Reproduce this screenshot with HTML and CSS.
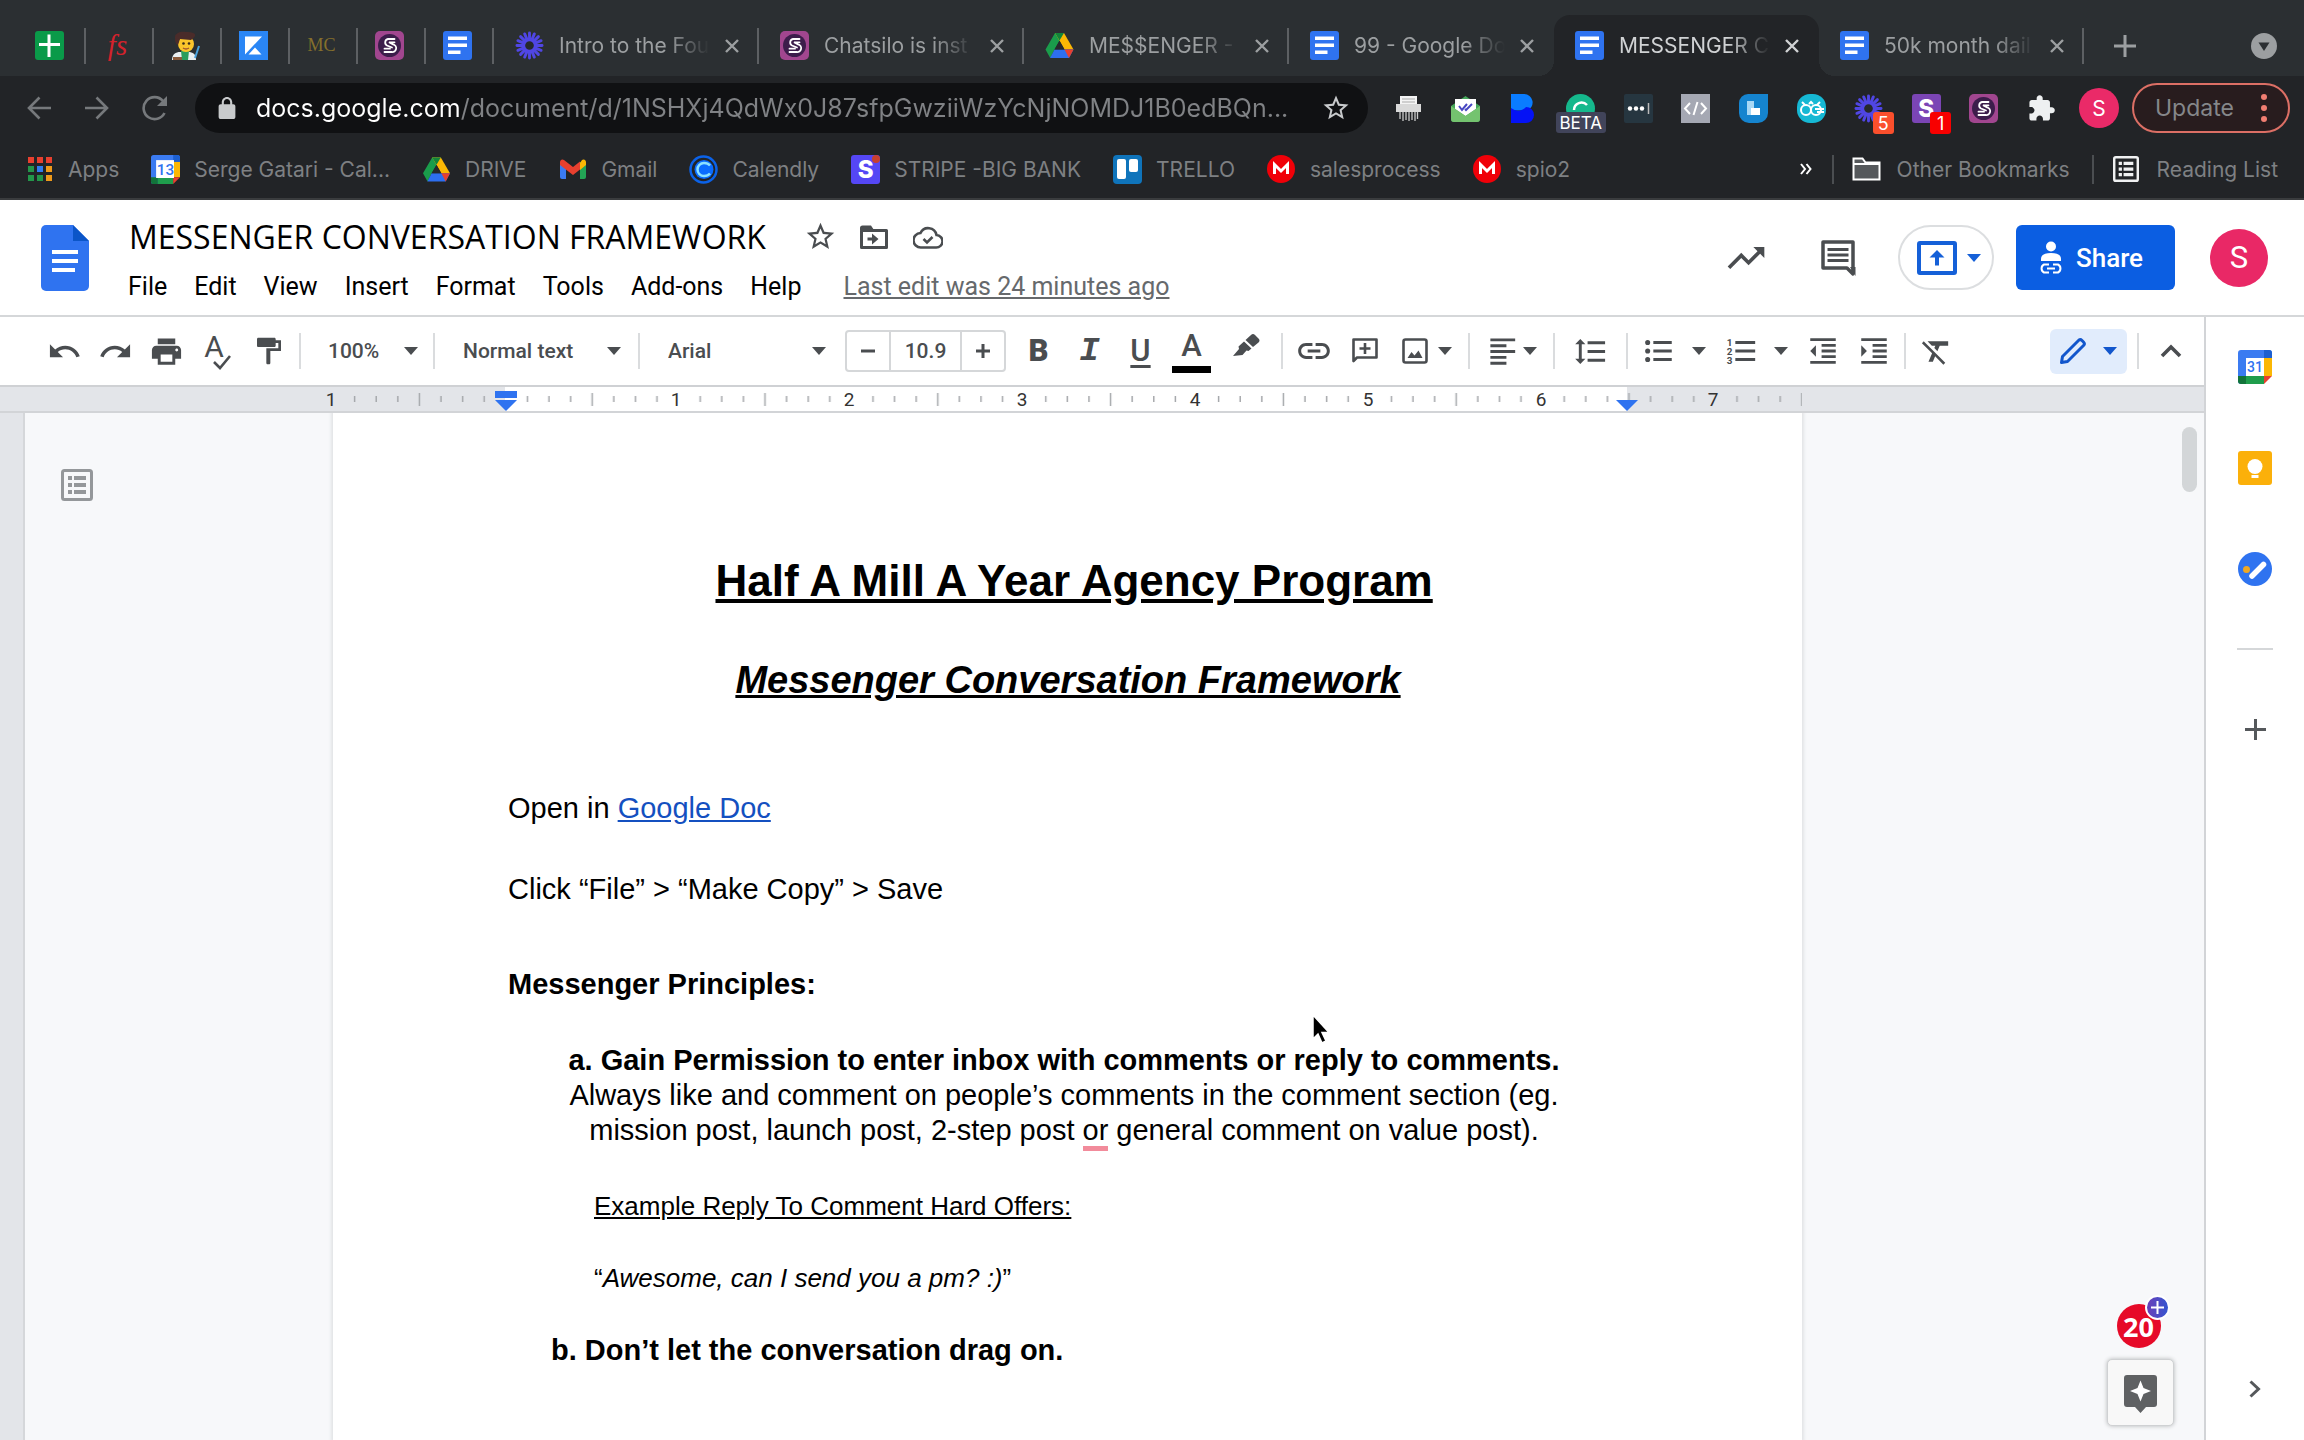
FILE: index.html
```
<!DOCTYPE html>
<html lang="en">
<head>
    <meta charset="UTF-8">
    <meta name="viewport" content="width=device-width, initial-scale=1.0">
    <title>MESSENGER CONVERSATION FRAMEWORK - Google Docs</title>
    <link rel="stylesheet" href="styles.css">
</head>
<body>
    <!-- Shared icons -->
    <svg class="sprite" aria-hidden="true">
        <symbol id="i-caret" viewBox="0 0 14 8"><path d="M0 0h14L7 8z"/></symbol>
        <symbol id="i-close" viewBox="0 0 14 14"><path d="M1 1l12 12M13 1L1 13" fill="none" stroke="currentColor" stroke-width="2.4"/></symbol>
        <symbol id="i-doc" viewBox="0 0 29 29">
            <rect width="29" height="29" rx="3" fill="#2f73f0"/>
            <path d="M5 5.500h19v3.500H5zM5 12.500h19V16H5zM5 19.500h12.500V23H5z" fill="#fff"/>
        </symbol>
        <symbol id="i-silo" viewBox="0 0 29 29">
            <rect width="29" height="29" rx="5" fill="#a1468f"/>
            <circle cx="14.500" cy="14.500" r="11.500" fill="#3c1d4b"/>
            <path d="M19.500 8h-6.500a3.500 3.500 0 0 0-1 6.500l5 2M19.500 11.300h-5.500l4 2a3.800 3.800 0 0 1-1.500 7.700H9.500M15 17.700H9.500" fill="none" stroke="#fff" stroke-width="1.800" stroke-linecap="round"/>
        </symbol>
        <symbol id="i-loom" viewBox="0 0 30 30">
            <g stroke="#5046e4" stroke-width="3" stroke-linecap="round">
                <path d="M15 2v26M2 15h26M5.800 5.800l18.400 18.400M24.200 5.800L5.800 24.200M10 3l10 24M20 3L10 27M3 10l24 10M27 10L3 20"/>
            </g>
            <circle cx="15" cy="15" r="5" fill="#26292c"/>
            <circle cx="15" cy="15" r="5.500" fill="none" stroke="#5046e4" stroke-width="2"/>
        </symbol>
        <symbol id="i-drive" viewBox="0 0 28 25">
            <path d="M9.500 0h9L9 16.500 4.700 25 0 16.500z" fill="#1a9c4b"/>
            <path d="M9.500 0h9L28 16.500h-9z" fill="#fbb704"/>
            <path d="M9 16.500h19L23.500 25h-19z" fill="#2d6ff0"/>
            <path d="M19 16.500h9L23.500 25z" fill="#e8402f"/>
            <path d="M14 7.500l5 9H9z" fill="#26292c"/>
            <path d="M9.500 0h9L14 7.500z" fill="#12843a"/>
        </symbol>
        <symbol id="i-mind" viewBox="0 0 28 28">
            <circle cx="14" cy="14" r="14" fill="#f00008"/>
            <path d="M7.500 19V9.500L14 16l6.500-6.500V19" fill="none" stroke="#fff" stroke-width="3"/>
        </symbol>
        <symbol id="i-star" viewBox="0 0 24 24"><path d="M22 9.240l-7.190-.62L12 2 9.190 8.630 2 9.240l5.460 4.730L5.820 21 12 17.270 18.180 21l-1.630-7.030L22 9.240zM12 15.400l-3.760 2.270 1-4.280-3.320-2.880 4.380-.38L12 6.100l1.710 4.040 4.380.38-3.320 2.880 1 4.280L12 15.400z"/></symbol>
        <symbol id="i-list" viewBox="0 0 32 32">
            <rect x="1.500" y="1.500" width="29" height="29" rx="2" fill="none" stroke="currentColor" stroke-width="3"/>
            <path d="M7 7h4v4H7zM13 7h12v4H13zM7 14h4v4H7zM13 14h12v4H13zM7 21h4v4H7zM13 21h12v4H13z"/>
        </symbol>
        <symbol id="i-undo" viewBox="0 0 24 24"><path d="M12.500 8c-2.650 0-5.050.99-6.900 2.600L2 7v9h9l-3.620-3.620c1.390-1.160 3.160-1.880 5.120-1.880 3.540 0 6.550 2.310 7.600 5.500l2.370-.78C21.080 11.030 17.150 8 12.500 8z"/></symbol>
        <symbol id="i-cal" viewBox="0 0 34 34">
            <path d="M3 0h28a3 3 0 0 1 3 3v5H8v26H3a3 3 0 0 1-3-3V3a3 3 0 0 1 3-3z" fill="#3b7bf1"/>
            <path d="M26 8h8v18h-8z" fill="#fbb704"/>
            <path d="M26 0h5a3 3 0 0 1 3 3v5h-8z" fill="#1c5fd0"/>
            <path d="M8 26h18v8H8z" fill="#1f9d4c"/>
            <path d="M0 26h8v8H3a3 3 0 0 1-3-3z" fill="#12743a"/>
            <path d="M26 26h8l-8 8z" fill="#e8402f"/>
            <path d="M8 8h18v18H8z" fill="#fff"/>
        </symbol>
    </svg>

    <header class="browser">
        <div class="tabstrip">
            <div class="tab pinned">
                <svg width="29" height="29" viewBox="0 0 29 29"><rect width="29" height="29" rx="3" fill="#0a9a49"/><path d="M12.500 3.500h3v8.500h9.500v3h-9.500v11h-3V15H4v-3h8.500z" fill="#fff"/></svg>
            </div>
            <div class="tab pinned"><span class="mark fs">fs</span></div>
            <div class="tab pinned">
                <svg width="29" height="29" viewBox="0 0 29 29">
                    <path d="M1 29c0-6 4-8 8-8h8c5 0 8 2 8 8z" fill="#e9eef0"/>
                    <path d="M10 20h8l-1 9h-6z" fill="#2a9d5c"/>
                    <path d="M2 26h9v3H2z" fill="#8a5a3a"/>
                    <circle cx="15" cy="13" r="8" fill="#fcc52b"/>
                    <path d="M4 6c0-4 6-6 11-5 6 0 10 1 9 4-1 2-3 3-4 4l-11-1-2 6c-3-1-3-5-3-8z" fill="#4a2c2a"/>
                    <circle cx="12.500" cy="12.500" r="1.300" fill="#3a2a1a"/><circle cx="18" cy="12.500" r="1.300" fill="#3a2a1a"/>
                    <path d="M12 17q3 2 6 0" fill="none" stroke="#a0522d" stroke-width="1.300"/>
                    <path d="M24 27l4-12" stroke="#4aa3df" stroke-width="2"/>
                </svg>
            </div>
            <div class="tab pinned">
                <svg width="29" height="29" viewBox="0 0 29 29"><path d="M0 0h29v29H0z" fill="#2a86f5"/><path d="M6 5.500h17L6 23.500zM9.500 23.500l6.500-7 6.500 7z" fill="#fff"/></svg>
            </div>
            <div class="tab pinned"><span class="mark mc">MC</span></div>
            <div class="tab pinned"><svg width="29" height="29"><use href="#i-silo"/></svg></div>
            <div class="tab pinned"><svg width="29" height="29"><use href="#i-doc"/></svg></div>

            <div class="tab">
                <svg width="29" height="29"><use href="#i-loom"/></svg>
                <span class="tab-title">Intro to the Fou</span>
                <button class="close" aria-label="Close tab"><svg width="14" height="14"><use href="#i-close"/></svg></button>
            </div>
            <div class="tab">
                <svg width="29" height="29"><use href="#i-silo"/></svg>
                <span class="tab-title">Chatsilo is inst</span>
                <button class="close" aria-label="Close tab"><svg width="14" height="14"><use href="#i-close"/></svg></button>
            </div>
            <div class="tab">
                <svg width="29" height="25"><use href="#i-drive"/></svg>
                <span class="tab-title">ME$$ENGER -</span>
                <button class="close" aria-label="Close tab"><svg width="14" height="14"><use href="#i-close"/></svg></button>
            </div>
            <div class="tab before-active">
                <svg width="29" height="29"><use href="#i-doc"/></svg>
                <span class="tab-title">99 - Google Do</span>
                <button class="close" aria-label="Close tab"><svg width="14" height="14"><use href="#i-close"/></svg></button>
            </div>
            <div class="tab active">
                <svg width="29" height="29"><use href="#i-doc"/></svg>
                <span class="tab-title">MESSENGER C</span>
                <button class="close" aria-label="Close tab"><svg width="14" height="14"><use href="#i-close"/></svg></button>
            </div>
            <div class="tab">
                <svg width="29" height="29"><use href="#i-doc"/></svg>
                <span class="tab-title">50k month dail</span>
                <button class="close" aria-label="Close tab"><svg width="14" height="14"><use href="#i-close"/></svg></button>
            </div>
            <button class="new-tab" aria-label="New tab"><svg width="22" height="22" viewBox="0 0 22 22"><path d="M9.500 0h3v9.500H22v3h-9.500V22h-3v-9.500H0v-3h9.500z"/></svg></button>
            <button class="tab-search" aria-label="Search tabs"><svg width="26" height="26" viewBox="0 0 26 26"><circle cx="13" cy="13" r="13"/><path d="M7.500 9.500h11L13 18z" fill="#2b2f32"/></svg></button>
        </div>

        <div class="navbar">
            <button class="nav" aria-label="Back"><svg width="24" height="24" viewBox="0 0 24 24"><path d="M24 12H2M12.500 1.500L2 12l10.500 10.500" fill="none" stroke="currentColor" stroke-width="2.600"/></svg></button>
            <button class="nav" aria-label="Forward"><svg width="24" height="24" viewBox="0 0 24 24"><path d="M0 12h22M11.500 1.500L22 12 11.500 22.500" fill="none" stroke="currentColor" stroke-width="2.600"/></svg></button>
            <button class="nav" aria-label="Reload"><svg width="26" height="26" viewBox="0 0 26 26"><path d="M22.500 18A11 11 0 1 1 21 6l3 3.500" fill="none" stroke="currentColor" stroke-width="2.600"/><path d="M25 1v10H15z"/></svg></button>

            <div class="omnibox">
                <svg width="22" height="22" viewBox="3 1 18 21"><path d="M18 8h-1V6c0-2.760-2.240-5-5-5S7 3.240 7 6v2H6c-1.100 0-2 .9-2 2v10c0 1.100.9 2 2 2h12c1.100 0 2-.9 2-2V10c0-1.100-.9-2-2-2zM9 6c0-1.660 1.340-3 3-3s3 1.340 3 3v2H9V6z"/></svg>
                <input type="text" aria-label="Address" value="docs.google.com/document/d/1NSHXj4QdWx0J87sfpGwziiWzYcNjNOMDJ1B0edBQn...">
                <button aria-label="Bookmark this tab"><svg width="30" height="30"><use href="#i-star"/></svg></button>
            </div>

            <div class="extensions">
                <button class="ext" aria-label="Print"><svg width="25" height="25" viewBox="0 0 25 25"><path d="M4 0h17v9H4z" fill="#f4f4f4"/><path d="M0 8h25v8H0z" fill="#d9d9d9"/><path d="M6 3h13M6 6h13" stroke="#aaa"/><path d="M4 16v7M7 16v9M10 16v8M13 16v9M16 16v8M19 16v9M21.500 16v7" stroke="#c9c9c9" stroke-width="1.300"/></svg></button>
                <button class="ext" aria-label="Mail tracker"><svg width="29" height="29" viewBox="0 0 29 29"><path d="M0 12L14.500 2 29 12v13a3 3 0 0 1-3 3H3a3 3 0 0 1-3-3z" fill="#45a65a"/><path d="M4 5h21v10l-10.500 7L4 15z" fill="#fff"/><path d="M0 12l14.500 10L29 12v13a3 3 0 0 1-3 3H3a3 3 0 0 1-3-3z" fill="#74c36f"/><path d="M8 12l3 4 5-6M14 15l1 1 6-6" fill="none" stroke="#4747c2" stroke-width="2"/></svg></button>
                <button class="ext" aria-label="Extension"><svg width="24" height="29" viewBox="0 0 24 29"><path d="M0 0h13a8.500 8.500 0 0 1 3 16.500H0z" fill="#0a7cff"/><path d="M0 14q8 6 15-1a8 8 0 1 1 0 16H0z" fill="#0412f5"/></svg></button>
                <button class="ext grammar" aria-label="Grammar, beta"><svg width="29" height="29" viewBox="0 0 29 29"><circle cx="14.500" cy="14.500" r="14.500" fill="#15b88c"/><path d="M8 16a7.500 7.500 0 0 1 13-5" fill="none" stroke="#fff" stroke-width="2.500"/></svg><span class="beta">BETA</span></button>
                <button class="ext" aria-label="Passwords"><svg width="29" height="29" viewBox="0 0 29 29"><rect width="29" height="29" rx="2" fill="#263640"/><g fill="#fff"><circle cx="6" cy="14.500" r="2.200"/><circle cx="12" cy="14.500" r="2.200"/><circle cx="18" cy="14.500" r="2.200"/></g><path d="M24.500 9v11" stroke="#bbb" stroke-width="1.500"/></svg></button>
                <button class="ext" aria-label="Source"><svg width="29" height="29" viewBox="0 0 29 29"><path d="M0 0h29v29H0z" fill="#a5a8b3"/><path d="M9 9l-5 5.500L9 20M20 9l5 5.500-5 5.500M16.500 8l-4 13" fill="none" stroke="#fff" stroke-width="2"/></svg></button>
                <button class="ext" aria-label="Leads"><svg width="29" height="29" viewBox="0 0 29 29"><path d="M9 0h20v19a10 10 0 0 1-10 10h-9A10 10 0 0 1 0 19V9a9 9 0 0 1 9-9z" fill="#1584cf"/><path d="M8 7h7v14H8z" fill="#a9d8f5"/><path d="M12 14h9v7h-9z" fill="#fff"/></svg></button>
                <button class="ext" aria-label="Owl"><svg width="29" height="29" viewBox="0 0 29 29"><rect width="29" height="29" rx="13" fill="#16b8d4"/><g fill="none" stroke="#fff" stroke-width="2"><circle cx="9" cy="16" r="5"/><circle cx="19" cy="16" r="5"/><path d="M5 8l3 3M12 10l2-2 2 2M23 8l-3 3M18 15h9M20 18h7"/></g></svg></button>
                <button class="ext" aria-label="Recorder, 5 new"><svg width="29" height="29"><use href="#i-loom"/></svg><span class="count orange">5</span></button>
                <button class="ext" aria-label="Scraper, 1 new"><span class="letter purple">S</span><span class="count red">1</span></button>
                <button class="ext" aria-label="Chatsilo"><svg width="29" height="29"><use href="#i-silo"/></svg></button>
                <button class="ext puzzle" aria-label="Extensions"><svg width="29" height="29" viewBox="0 0 24 24"><path d="M20.500 11H19V7c0-1.100-.9-2-2-2h-4V3.500C13 2.120 11.880 1 10.500 1S8 2.120 8 3.500V5H4c-1.100 0-1.990.9-1.990 2v3.800H3.500c1.490 0 2.700 1.210 2.700 2.700s-1.210 2.700-2.700 2.700H2V20c0 1.100.9 2 2 2h3.800v-1.500c0-1.490 1.210-2.700 2.700-2.700 1.490 0 2.700 1.210 2.700 2.700V22H17c1.100 0 2-.9 2-2v-4h1.500c1.380 0 2.500-1.120 2.500-2.500S21.880 11 20.500 11z"/></svg></button>
                <button class="profile" aria-label="Profile">S</button>
            </div>
            <button class="update">Update <svg width="6" height="36" viewBox="0 0 6 36"><circle cx="3" cy="7" r="3"/><circle cx="3" cy="18" r="3"/><circle cx="3" cy="29" r="3"/></svg></button>
        </div>

        <nav class="bookmarks">
            <a href="#"><span class="bm-icon"><svg width="24" height="24" viewBox="0 0 24 24"><path d="M0 0h6v6H0zM9 0h6v6H9zM18 0h6v6h-6z" fill="#e8402f"/><path d="M0 9h6v6H0z" fill="#23964a"/><path d="M9 9h6v6H9z" fill="#2f7cf0"/><path d="M18 9h6v6h-6z" fill="#f09a1a"/><path d="M0 18h6v6H0zM9 18h6v6H9z" fill="#23964a"/><path d="M18 18h6v6h-6z" fill="#f09a1a"/></svg></span>Apps</a>
            <a href="#"><span class="bm-icon"><svg width="29" height="29" viewBox="0 0 34 34"><use href="#i-cal" width="34" height="34"/><path d="M6 6h21v21H6z" fill="#fff"/><text x="17" y="23" class="cal-small">13</text></svg></span>Serge Gatari - Cal...</a>
            <a href="#"><span class="bm-icon"><svg width="27" height="25"><use href="#i-drive"/></svg></span>DRIVE</a>
            <a href="#"><span class="bm-icon"><svg width="26" height="20" viewBox="0 0 26 20"><path d="M0 3h6v17H2a2 2 0 0 1-2-2z" fill="#3b7bf1"/><path d="M20 3h6v15a2 2 0 0 1-2 2h-4z" fill="#23a455"/><path d="M20 4l2-3a2.500 2.500 0 0 1 4 2v3l-6 5z" fill="#fbb704"/><path d="M0 3a2.500 2.500 0 0 1 4-2l9 7 7-5.500v8L13 16 0 6z" fill="#e8402f"/></svg></span>Gmail</a>
            <a href="#"><span class="bm-icon"><svg width="29" height="29" viewBox="0 0 29 29"><circle cx="14.500" cy="14.500" r="13" fill="none" stroke="#0b62e8" stroke-width="2.500"/><circle cx="15" cy="14.500" r="9.500" fill="#0a6cff"/><path d="M21 10.500q-2-2.500-6-2.500a6.500 6.500 0 0 0 0 13q4 0 6-2.500" fill="none" stroke="#8be0ff" stroke-width="2.500"/></svg></span>Calendly</a>
            <a href="#"><span class="bm-icon stripe"><span class="letter indigo">S</span></span>STRIPE -BIG BANK</a>
            <a href="#"><span class="bm-icon"><svg width="29" height="29" viewBox="0 0 29 29"><rect width="29" height="29" rx="4" fill="#0f74bb"/><rect x="4" y="4" width="9" height="20" rx="2" fill="#fff"/><rect x="16" y="4" width="9" height="13" rx="2" fill="#fff"/></svg></span>TRELLO</a>
            <a href="#"><span class="bm-icon"><svg width="28" height="28"><use href="#i-mind"/></svg></span>salesprocess</a>
            <a href="#"><span class="bm-icon"><svg width="28" height="28"><use href="#i-mind"/></svg></span>spio2</a>
            <button class="more" aria-label="More bookmarks"><svg width="12" height="12" viewBox="0 0 12 12"><path d="M1 1l4 5-4 5M6.500 1l4 5-4 5" fill="none" stroke="#fff" stroke-width="2"/></svg></button>
            <a href="#" class="split"><span class="bm-icon"><svg width="29" height="24" viewBox="0 0 29 24"><path d="M1.500 1.500h9l3 4h14v17h-26z" fill="#55585b" stroke="#fff" stroke-width="2"/><path d="M2 7h25" stroke="#fff" stroke-width="2"/></svg></span>Other Bookmarks</a>
            <a href="#" class="split"><span class="bm-icon light"><svg width="26" height="26"><use href="#i-list"/></svg></span>Reading List</a>
        </nav>
    </header>

    <header class="doc-header">
        <a href="#" class="logo" aria-label="Docs home">
            <svg width="48" height="66" viewBox="0 0 48 66"><path d="M5 0h27l16 16v45a5 5 0 0 1-5 5H5a5 5 0 0 1-5-5V5a5 5 0 0 1 5-5z" fill="#2f73f0"/><path d="M32 0l16 16H32z" fill="#0b55c8"/><path d="M11 25h26v4H11zM11 34h26v4H11zM11 43h23v4H11z" fill="#fff"/></svg>
        </a>
        <div class="doc-meta">
            <div class="title-row">
                <input class="doc-title" type="text" aria-label="Document title" value="MESSENGER CONVERSATION FRAMEWORK">
                <button aria-label="Star"><svg width="33" height="33"><use href="#i-star"/></svg></button>
                <button aria-label="Move"><svg width="28" height="24" viewBox="0 0 28 24"><path d="M1.500 5.500h25v17h-25z" fill="none" stroke="currentColor" stroke-width="3" stroke-linejoin="round"/><path d="M0 3q0-2.500 2.500-2.500H11L14 5H0zM12 8.500l6.500 5.500-6.500 5.500v-4H7.500v-3H12z"/></svg></button>
                <button aria-label="Saved to Drive"><svg width="30" height="24" viewBox="0 0 30 24"><path d="M23.500 10A8.500 8.500 0 0 0 7.500 8 7 7 0 0 0 8 22.500h15a6.200 6.200 0 0 0 .5-12.500z" fill="none" stroke="currentColor" stroke-width="2.600"/><path d="M10.500 14l3.500 3.500 5.500-5.500" fill="none" stroke="currentColor" stroke-width="2.600"/></svg></button>
            </div>
            <div class="menubar">
                <button>File</button>
                <button>Edit</button>
                <button>View</button>
                <button>Insert</button>
                <button>Format</button>
                <button>Tools</button>
                <button>Add-ons</button>
                <button>Help</button>
                <a href="#" class="last-edit">Last edit was 24 minutes ago</a>
            </div>
        </div>
        <div class="doc-actions">
            <button aria-label="Activity"><svg width="44" height="44" viewBox="0 0 24 24"><path d="M16 6l2.290 2.290-4.880 4.880-4-4L2 16.590 3.410 18l6-6 4 4 6.300-6.290L22 12V6z"/></svg></button>
            <button aria-label="Comments"><svg width="36" height="36" viewBox="0 0 36 36"><path d="M3 2h30v32l-6-6H3z" fill="none" stroke="currentColor" stroke-width="3.500" stroke-linejoin="round"/><path d="M30 27h5.500v9zM7.500 8h21v3h-21zM7.500 13.500h21v3h-21zM7.500 19h21v3h-21z"/></svg></button>
            <button class="present" aria-label="Present"><svg width="40" height="34" viewBox="0 0 40 34"><rect x="2" y="2" width="36" height="30" rx="1" fill="none" stroke="currentColor" stroke-width="4"/><path d="M20 9l7.500 7.500h-5.500v8h-4v-8h-5.500z"/></svg><svg width="14" height="8"><use href="#i-caret"/></svg></button>
            <button class="share"><svg width="26" height="33" viewBox="0 0 26 33"><circle cx="13" cy="5.500" r="5"/><path d="M3 20v-2q0-6 10-6t10 6v2z"/><path d="M11 31.500H6a4.500 4.500 0 0 1 0-8h5M15 23.500h5a4.500 4.500 0 0 1 0 8h-5M9 27.500h8" fill="none" stroke="currentColor" stroke-width="2"/></svg>Share</button>
            <button class="account" aria-label="Google Account">S</button>
        </div>
    </header>

    <div class="workspace">
        <div class="main">
            <div class="toolbar" role="toolbar">
                <button aria-label="Undo"><svg width="35" height="35"><use href="#i-undo"/></svg></button>
                <button aria-label="Redo"><svg class="flip" width="35" height="35"><use href="#i-undo"/></svg></button>
                <button aria-label="Print"><svg width="35" height="35" viewBox="0 0 24 24"><path d="M19 8H5c-1.660 0-3 1.340-3 3v6h4v4h12v-4h4v-6c0-1.660-1.340-3-3-3zm-3 11H8v-5h8v5zm3-7c-.55 0-1-.45-1-1s.45-1 1-1 1 .45 1 1-.45 1-1 1zm-1-9H6v4h12V3z"/></svg></button>
                <button class="spell" aria-label="Spelling"><span>A</span><svg width="18" height="15" viewBox="0 0 18 15"><path d="M1 7l6 6L17 1" fill="none" stroke="currentColor" stroke-width="2.600"/></svg></button>
                <button aria-label="Paint format"><svg width="32" height="32" viewBox="0 0 24 24"><path d="M17 4V3c0-.55-.45-1-1-1H4c-.55 0-1 .45-1 1v5c0 .55.45 1 1 1h12c.55 0 1-.45 1-1V6h2v4h-9v11c0 .55.45 1 1 1h1c.55 0 1-.45 1-1v-9h8V4h-4z"/></svg></button>
                <span class="sep"></span>
                <label class="select zoom"><select aria-label="Zoom"><option>100%</option></select><svg width="14" height="8"><use href="#i-caret"/></svg></label>
                <span class="sep"></span>
                <label class="select"><select aria-label="Style"><option>Normal text</option></select><svg width="14" height="8"><use href="#i-caret"/></svg></label>
                <span class="sep"></span>
                <label class="select"><select aria-label="Font"><option>Arial</option></select><svg width="14" height="8"><use href="#i-caret"/></svg></label>
                <div class="font-size">
                    <button aria-label="Decrease font size"><svg width="14" height="14" viewBox="0 0 14 14"><path d="M0 5.500h14v3H0z"/></svg></button>
                    <input type="text" aria-label="Font size" value="10.9">
                    <button aria-label="Increase font size"><svg width="14" height="14" viewBox="0 0 14 14"><path d="M5.500 0h3v5.500H14v3H8.500V14h-3V8.500H0v-3h5.500z"/></svg></button>
                </div>
                <button class="glyph bold" aria-label="Bold">B</button>
                <button class="glyph italic" aria-label="Italic">I</button>
                <button class="glyph under" aria-label="Underline">U</button>
                <button class="glyph color" aria-label="Text color"><span>A</span></button>
                <button class="highlight" aria-label="Highlight color"><svg width="27" height="24" viewBox="0 0 27 24"><path d="M18 2q2-2 4 0l3.500 3.500q2 2 0 4L20 14l-7.500-7zM11 8.500l7.500 7-3 2.500-2-.5L9.500 22 0 23l6-7-.5-2.500z"/></svg></button>
                <span class="sep"></span>
                <button aria-label="Insert link"><svg width="38" height="38" viewBox="0 0 24 24"><path d="M3.900 12c0-1.710 1.390-3.100 3.100-3.100h4V7H7c-2.760 0-5 2.240-5 5s2.240 5 5 5h4v-1.900H7c-1.710 0-3.100-1.390-3.100-3.100zM8 13h8v-2H8v2zm9-6h-4v1.900h4c1.710 0 3.100 1.390 3.100 3.100s-1.390 3.100-3.100 3.100h-4V17h4c2.760 0 5-2.240 5-5s-2.240-5-5-5z"/></svg></button>
                <button aria-label="Add comment"><svg width="26" height="26" viewBox="0 0 26 26"><path d="M1.500 23V1.500h23v18H5z" fill="none" stroke="currentColor" stroke-width="2.600" stroke-linejoin="round"/><path d="M11.700 5h2.600v4.200h4.200v2.600h-4.200V16h-2.600v-4.200H7.500V9.200h4.200z"/></svg></button>
                <button class="drop image" aria-label="Insert image"><svg width="26" height="26" viewBox="0 0 26 26"><rect x="1.500" y="1.500" width="23" height="23" rx="2" fill="none" stroke="currentColor" stroke-width="2.600"/><path d="M5.500 20l4-6 3 3.500 4-5 4 7.500z"/></svg><svg width="14" height="8"><use href="#i-caret"/></svg></button>
                <span class="sep"></span>
                <button class="drop align" aria-label="Align"><svg width="35" height="35" viewBox="0 0 24 24"><path d="M14 15H3v2h11v-2zm0-8H3v2h11V7zM3 13h17v-2H3v2zm0 8h11v-2H3v2zM3 3v2h17V3H3z"/></svg><svg width="14" height="8"><use href="#i-caret"/></svg></button>
                <span class="sep"></span>
                <button class="wide" aria-label="Line spacing"><svg width="35" height="35" viewBox="0 0 24 24"><path d="M6 7h2.500L5 3.500 1.500 7H4v10H1.500L5 20.500 8.500 17H6V7zm4-2v2h12V5H10zm0 14h12v-2H10v2zm0-6h12v-2H10v2z"/></svg></button>
                <span class="sep"></span>
                <button class="drop list" aria-label="Bulleted list"><svg width="34" height="34" viewBox="0 0 24 24"><path d="M4 10.200a1.800 1.800 0 1 0 0 3.600 1.800 1.800 0 0 0 0-3.600zm0-6a1.800 1.800 0 1 0 0 3.600 1.800 1.800 0 0 0 0-3.600zm0 12a1.800 1.800 0 1 0 0 3.600 1.800 1.800 0 0 0 0-3.600zM8 19h13v-2H8v2zm0-6h13v-2H8v2zm0-8v2h13V5H8z"/></svg><svg width="14" height="8"><use href="#i-caret"/></svg></button>
                <button class="drop list" aria-label="Numbered list"><svg width="34" height="34" viewBox="0 0 24 24"><path d="M8 19h14v-2H8v2zm0-6h14v-2H8v2zm0-8v2h14V5H8z"/><text x="2" y="8.500" class="num">1</text><text x="2" y="14.800" class="num">2</text><text x="2" y="21" class="num">3</text></svg><svg width="14" height="8"><use href="#i-caret"/></svg></button>
                <button aria-label="Decrease indent"><svg width="34" height="34" viewBox="0 0 24 24"><path d="M11 17h10v-2H11v2zm-8-5l4 4V8l-4 4zm0 9h18v-2H3v2zM3 3v2h18V3H3zm8 6h10V7H11v2zm0 4h10v-2H11v2z"/></svg></button>
                <button aria-label="Increase indent"><svg width="34" height="34" viewBox="0 0 24 24"><path d="M3 21h18v-2H3v2zM3 8v8l4-4-4-4zm8 9h10v-2H11v2zM3 3v2h18V3H3zm8 6h10V7H11v2zm0 4h10v-2H11v2z"/></svg></button>
                <span class="sep"></span>
                <button aria-label="Clear formatting"><svg width="35" height="35" viewBox="0 0 24 24"><path d="M3.270 5L2 6.270l6.970 6.970L6.500 19h3l1.570-3.660L16.730 21 18 19.730 3.550 5.270 3.270 5zM6 5v.18L8.820 8h2.400l-.72 1.680 2.100 2.100L14.210 8H20V5H6z"/></svg></button>
                <button class="mode" aria-label="Editing mode"><svg width="26" height="26" viewBox="0 0 26 26"><path d="M1.500 24.500l1-6L19 2q1.500-1 3 .5l1.500 1.500q1.500 1.500.5 3L7.500 23.500z" fill="none" stroke="currentColor" stroke-width="3" stroke-linejoin="round"/></svg><svg width="14" height="8"><use href="#i-caret"/></svg></button>
                <span class="sep"></span>
                <button class="collapse" aria-label="Hide menus"><svg width="22" height="14" viewBox="0 0 22 14"><path d="M2 12l9-9 9 9" fill="none" stroke="currentColor" stroke-width="3.600"/></svg></button>
            </div>

            <div class="ruler canvas-grid">
                <svg class="ruler-scale" height="24" aria-hidden="true">
                    <defs>
                        <pattern id="inch" width="172.800" height="24" patternUnits="userSpaceOnUse">
                            <path d="M21.600 9v6M43.200 9v6M64.800 9v6M108 9v6M129.600 9v6M151.200 9v6" stroke="#a5a8ab" stroke-width="1.500"/>
                            <path d="M86.400 6v13" stroke="#a5a8ab" stroke-width="1.500"/>
                        </pattern>
                    </defs>
                    <rect x="172" width="1122" height="24" fill="#fff"/>
                    <rect width="1469" height="24" fill="url(#inch)"/>
                    <text x="-2" y="19">1</text>
                    <text x="343" y="19">1</text>
                    <text x="516" y="19">2</text>
                    <text x="689" y="19">3</text>
                    <text x="862" y="19">4</text>
                    <text x="1035" y="19">5</text>
                    <text x="1208" y="19">6</text>
                    <text x="1380" y="19">7</text>
                    <path d="M162 4h22v7h-22zM162 13h22l-11 11z" fill="#2f73f0"/>
                    <path d="M1283 13h22l-11 11z" fill="#2f73f0"/>
                </svg>
            </div>

            <div class="canvas canvas-grid">
                <div class="v-ruler"></div>
                <button class="outline" aria-label="Show document outline"><svg width="32" height="32"><use href="#i-list"/></svg></button>
                <main class="page">
                    <h1>&nbsp;<u>Half A Mill A Year Agency Program</u></h1>
                    <h2>Messenger Conversation Framework</h2>
                    <p class="open">Open in <a href="#">Google Doc</a></p>
                    <p class="copy">Click “File” &gt; “Make Copy” &gt; Save</p>
                    <h3 class="principles">Messenger Principles:</h3>
                    <p class="point-a"><b>a. Gain Permission to enter inbox with comments or reply to comments.</b>&nbsp;<br>
                        Always like and comment on people’s comments in the comment section (eg.&nbsp;<br>
                        mission post, launch post, 2-step post <span class="typo">or</span> general comment on value post).&nbsp;</p>
                    <p class="example"><u>Example Reply To Comment Hard Offers:</u></p>
                    <p class="quote">“<i>Awesome, can I send you a pm? :)</i>”</p>
                    <h3 class="point-b">b. Don’t let the conversation drag on.</h3>
                </main>
                <div class="scroll-thumb"></div>
                <div class="floating">
                    <button class="counter" aria-label="20 suggestions">20<span class="plus"><svg width="13" height="13" viewBox="0 0 13 13"><path d="M6.500 0v13M0 6.500h13" stroke="#fff" stroke-width="2"/></svg></span></button>
                    <button class="explore" aria-label="Explore"><svg width="33" height="38" viewBox="0 0 33 38"><path d="M3 0h27a3 3 0 0 1 3 3v26a3 3 0 0 1-3 3h-8l-5.500 6-5.500-6H3a3 3 0 0 1-3-3V3a3 3 0 0 1 3-3z" fill="#5f6163"/><path d="M16.500 5.500l3 7.500 7.500 3-7.500 3-3 7.500-3-7.500L6 16l7.500-3z" fill="#fff"/></svg></button>
                </div>
            </div>
        </div>

        <aside class="sidebar">
            <button aria-label="Calendar"><svg width="34" height="34" viewBox="0 0 34 34"><use href="#i-cal" width="34" height="34"/><text x="17" y="22" class="cal-num">31</text></svg></button>
            <button aria-label="Keep"><svg width="34" height="34" viewBox="0 0 34 34"><rect width="34" height="34" rx="3" fill="#fbb00a"/><circle cx="17" cy="15.500" r="7.500" fill="#fff"/><path d="M13.500 19h7v3h-7zM13.500 24h7v3h-7z" fill="#fff"/></svg></button>
            <button aria-label="Tasks"><svg width="34" height="34" viewBox="0 0 34 34"><circle cx="17" cy="17" r="17" fill="#2f73f0"/><circle cx="8.500" cy="17.500" r="3.500" fill="#f0a822"/><path d="M14 24L25.500 12.500" stroke="#fff" stroke-width="5.500" stroke-linecap="round"/></svg></button>
            <hr>
            <button aria-label="Get add-ons"><svg width="21" height="21" viewBox="0 0 21 21"><path d="M9 0h3v9h9v3h-9v9H9v-9H0V9h9z"/></svg></button>
            <button class="hide-panel" aria-label="Hide side panel"><svg width="12" height="18" viewBox="0 0 12 18"><path d="M1.500 1.500L9.500 9l-8 7.500" fill="none" stroke="currentColor" stroke-width="3"/></svg></button>
        </aside>
    </div>

    <svg class="cursor" width="20" height="31" viewBox="0 0 20 31"><path d="M2 1v24l5-5 4 9 4-2-4-8.500h7z" fill="#000" stroke="#fff" stroke-width="1.500"/></svg>
</body>
</html>
```
FILE: styles.css
```
* {
    box-sizing: border-box;
    margin: 0;
    padding: 0;
}
body {
    display: flex;
    flex-direction: column;
    height: 100vh;
    overflow: hidden;
    background: #fff;
    color: #000;
    font-family: Roboto, sans-serif;
}
button, input, select {
    font: inherit;
    color: inherit;
    border: none;
    background: none;
    outline: none;
}
button {
    display: flex;
    align-items: center;
    justify-content: center;
    flex-shrink: 0;
    cursor: pointer;
}
a {
    color: inherit;
    text-decoration: none;
}
svg {
    display: block;
    flex-shrink: 0;
    fill: currentColor;
}
.sprite {
    position: absolute;
    width: 0;
    height: 0;
}

/* Browser window */
.browser {
    flex-shrink: 0;
    background: #222427;
    border-bottom: 2px solid #3a3c3e;
    font-family: Inter, sans-serif;
    font-size: 21px;
}
.tabstrip {
    display: flex;
    align-items: flex-end;
    height: 76px;
    padding-left: 18px;
    background: #2b2f32;
    color: #9c9fa1;
}
.tab {
    position: relative;
    display: flex;
    align-items: center;
    gap: 15px;
    flex: 0 1 265px;
    min-width: 0;
    height: 61px;
    padding: 0 20px 0 21px;
}
/* divider on the right edge of a tab */
.tab::after {
    content: "";
    position: absolute;
    right: 0;
    top: 13px;
    width: 2px;
    height: 36px;
    background: #5d6063;
}
.tab.pinned {
    flex: 0 0 68px;
    justify-content: center;
    padding: 0 5px 0 0;
}
.tab-title {
    flex: 1;
    min-width: 0;
    white-space: nowrap;
    line-height: 30px;
    mask-image: linear-gradient(90deg, #000 72%, transparent 100%);
}
.close {
    width: 14px;
    height: 30px;
}
.tab.active {
    background: #222427;
    border-radius: 16px 16px 0 0;
    color: #d0d2d4;
}
.tab.active::before, .tab.active::after {
    content: "";
    position: absolute;
    top: auto;
    bottom: 0;
    width: 16px;
    height: 16px;
}
.tab.active::before {
    left: -16px;
    background: radial-gradient(circle at 0 0, transparent 16px, #222427 16px);
}
.tab.active::after {
    right: -16px;
    background: radial-gradient(circle at 100% 0, transparent 16px, #222427 16px);
}
.tab.before-active::after {
    display: none;
}
.mark {
    font-family: "Liberation Serif", serif;
}
.fs {
    color: #d3222c;
    font-size: 29px;
    font-style: italic;
}
.mc {
    color: #85702c;
    font-size: 18px;
}
.new-tab {
    width: 82px;
    height: 61px;
}
.tab-search {
    height: 61px;
    margin-left: auto;
    margin-right: 27px;
}

.navbar {
    display: flex;
    align-items: center;
    height: 64px;
    padding: 0 14px 0 10px;
}
.nav {
    width: 58px;
    height: 50px;
    color: #76797c;
}
.omnibox {
    display: flex;
    align-items: center;
    flex: 0 1 1173px;
    gap: 18px;
    height: 50px;
    margin-left: 11px;
    padding: 0 17px 0 21px;
    border-radius: 25px;
    background: #101113;
    color: #c8cacc;
}
.omnibox input {
    flex: 1;
    min-width: 0;
    height: 40px;
    font-size: 25px;
    color: #8a8c8f;
    /* host is bright, path is dim */
    background: linear-gradient(90deg, #fff 205px, #808285 205px);
    background-clip: text;
    -webkit-text-fill-color: transparent;
}
.extensions {
    display: flex;
    align-items: center;
    justify-content: space-between;
    flex: 1;
    padding: 0 13px 0 20px;
}
.ext {
    position: relative;
    width: 40px;
    height: 50px;
}
.puzzle {
    color: #eef0f1;
}
.beta, .count {
    position: absolute;
    display: flex;
    align-items: center;
    justify-content: center;
    height: 21px;
    border-radius: 3px;
    color: #fff;
}
.beta {
    left: -5px;
    bottom: 0;
    width: 50px;
    background: #41445a;
    font-size: 17px;
}
.count {
    right: -5px;
    bottom: -1px;
    width: 21px;
    height: 22px;
    font-size: 18px;
}
.orange { background: #fb4f2c; }
.red { background: #f80000; }
.letter {
    display: flex;
    align-items: center;
    justify-content: center;
    width: 29px;
    height: 29px;
    border-radius: 3px;
    color: #fff;
    font-size: 24px;
    font-weight: 800;
}
.purple { background: #7b45b5; }
.indigo { background: #5547f5; }
.profile {
    width: 40px;
    height: 40px;
    border-radius: 50%;
    background: #ea2a68;
    color: #fff;
}
.update {
    justify-content: space-between;
    width: 158px;
    height: 50px;
    padding: 0 21px 0 21px;
    border: 2px solid #dc6f65;
    border-radius: 25px;
    background: #281c1e;
    color: #85878a;
    font-size: 23px;
}
.update svg {
    color: #f07e72;
}

.bookmarks {
    display: flex;
    align-items: center;
    gap: 32px;
    height: 58px;
    padding: 0 26px 0 25px;
    color: #7e8083;
    white-space: nowrap;
}
.bookmarks a {
    display: flex;
    align-items: center;
    gap: 14px;
}
.bm-icon {
    display: flex;
    justify-content: center;
    width: 29px;
}
.bm-icon.light {
    color: #f0f1f2;
}
.stripe {
    position: relative;
}
.stripe::after {
    content: "";
    position: absolute;
    right: 0;
    top: 0;
    width: 8px;
    height: 8px;
    border-radius: 50%;
    background: #c8402f;
}
.more {
    margin-left: auto;
    margin-right: -12px;
}
.bookmarks .split {
    gap: 16px;
    border-left: 2px solid #4b4e51;
    padding-left: 18px;
    height: 29px;
}
.split + .split {
    margin-left: -10px;
}

/* Docs header */
.doc-header {
    display: flex;
    align-items: center;
    flex-shrink: 0;
    height: 117px;
    padding: 0 36px 0 41px;
    border-bottom: 2px solid #d5d7d9;
}
.doc-meta {
    margin-left: 39px;
    margin-top: 14px;
}
.title-row {
    display: flex;
    align-items: center;
    gap: 22px;
    height: 44px;
    color: #4a4d50;
}
.title-row button {
    width: 32px;
}
.doc-title {
    width: 654px;
    padding-left: 1px;
    font-family: "Open Sans", sans-serif;
    font-size: 32px;
    line-height: 44px;
    color: #000;
}
.menubar {
    display: flex;
    align-items: center;
    gap: 27px;
    height: 56px;
    font-size: 25px;
    line-height: 30px;
}
.last-edit {
    margin-left: 15px;
    color: #66696c;
    text-decoration: underline;
}
.doc-actions {
    display: flex;
    align-items: center;
    margin-left: auto;
    color: #4a4d50;
}
.doc-actions button + button {
    margin-left: 52px;
}
.doc-actions .present {
    gap: 10px;
    width: 96px;
    height: 65px;
    margin-left: 42px;
    padding-left: 6px;
    border: 2px solid #dcdee0;
    border-radius: 33px;
    color: #1560d8;
}
.doc-actions .share {
    gap: 12px;
    width: 159px;
    height: 65px;
    margin-left: 22px;
    padding-right: 10px;
    border-radius: 6px;
    background: #0b5ee2;
    color: #fff;
    font-size: 26px;
    font-weight: 500;
}
.doc-actions .account {
    width: 58px;
    height: 58px;
    margin-left: 35px;
    border-radius: 50%;
    background: #e92866;
    color: #fff;
    font-size: 31px;
}

/* Workspace */
.workspace {
    display: flex;
    flex: 1;
    min-height: 0;
}
.main {
    display: flex;
    flex-direction: column;
    flex: 1;
    min-width: 0;
}
.toolbar {
    display: flex;
    align-items: center;
    flex-shrink: 0;
    height: 70px;
    padding-left: 39px;
    border-bottom: 2px solid #cfd1d4;
    color: #4a4d50;
    font-size: 21px;
    font-weight: 500;
}
.toolbar > button {
    width: 51px;
    height: 45px;
}
.sep {
    width: 2px;
    height: 36px;
    margin: 0 5px;
    background: #dadcde;
}
.flip {
    transform: scaleX(-1);
}
.toolbar .spell {
    font-size: 30px;
    font-weight: 400;
}
.spell span {
    line-height: 34px;
    margin-top: -8px;
}
.spell svg {
    margin-left: -11px;
    margin-top: 22px;
}
.select {
    display: flex;
    align-items: center;
    width: 193px;
    padding: 0 12px 0 23px;
}
.select select {
    flex: 1;
    min-width: 0;
    height: 40px;
    appearance: none;
}
.select.zoom {
    width: 122px;
    padding: 0 10px 0 22px;
}
.font-size {
    display: flex;
    height: 42px;
    margin: 0 7px;
    border: 2px solid #d5d7d9;
    border-radius: 4px;
}
.font-size button {
    width: 42px;
}
.font-size input {
    width: 73px;
    border: solid #d5d7d9;
    border-width: 0 2px;
    text-align: center;
}
.glyph {
    font-size: 31px;
    line-height: 32px;
}
.toolbar .bold {
    font-weight: 900;
}
.toolbar .italic {
    font-family: "Liberation Mono", monospace;
    font-style: italic;
    font-weight: bold;
    font-size: 34px;
}
.under {
    text-decoration: underline;
    text-decoration-thickness: 3px;
    text-underline-offset: 4px;
}
.color span {
    width: 39px;
    height: 43px;
    border-bottom: 7px solid #000;
    margin-top: 1px;
}
.toolbar .highlight {
    width: 59px;
    padding-bottom: 12px;
}
.toolbar .drop {
    gap: 10px;
    width: 73px;
}
.toolbar .drop.align {
    gap: 2px;
}
.toolbar .drop.list {
    gap: 16px;
    width: 82px;
}
.toolbar .wide {
    width: 61px;
}
.num {
    font: 700 7px Roboto, sans-serif;
}
.toolbar .mode {
    gap: 17px;
    width: 77px;
    margin-left: auto;
    margin-right: 5px;
    border-radius: 6px;
    background: #e1ecfc;
    color: #1256cc;
}
.toolbar .collapse {
    width: 60px;
    padding-right: 6px;
}

/* page column with equal gutters, scrollbar space at the right */
.canvas-grid {
    display: grid;
    grid-template-columns: 25px 1fr 1469px 1fr 94px;
}
.ruler {
    flex-shrink: 0;
    height: 26px;
    border-bottom: 2px solid #d2d4d7;
    background: #e3e5e9;
}
.ruler-scale {
    grid-column: 3;
    width: 100%;
    overflow: visible;
    color: #333;
    font-size: 19px;
    text-anchor: middle;
}
.canvas {
    position: relative;
    flex: 1;
    min-height: 0;
    background: #f7f8fa;
}
.v-ruler {
    border-right: 2px solid #d5d7da;
    background: #e3e5e9;
}
.outline {
    align-self: start;
    justify-self: start;
    margin: 56px 0 0 36px;
    color: #94979a;
}
.page {
    padding: 142px 174px 0 175px;
    background: #fff;
    box-shadow: 0 0 3px 2px #e2e4e6;
    clip-path: inset(0 -6px);
    font-family: "Liberation Sans", Arial, sans-serif;
    font-size: 29px;
    line-height: 35px;
}
h1 {
    font-size: 44px;
    line-height: 52px;
    text-align: center;
}
h2 {
    margin-top: 50px;
    font-size: 38px;
    line-height: 46px;
    font-style: italic;
    text-align: center;
    text-decoration: underline;
}
h3 {
    font-size: 29px;
}
.open {
    margin-top: 88px;
}
.open a {
    color: #1450c0;
    text-decoration: underline;
}
.copy {
    margin-top: 46px;
}
.principles {
    margin-top: 60px;
}
.point-a {
    margin-top: 41px;
    text-align: center;
    white-space: nowrap;
}
.typo {
    border-bottom: 5px solid #f28b9b;
}
.example {
    margin: 41px 0 0 86px;
    font-size: 26px;
}
.quote {
    margin: 37px 0 0 86px;
    font-size: 26px;
}
.point-b {
    margin: 37px 0 0 43px;
}
.scroll-thumb {
    position: absolute;
    top: 14px;
    right: 7px;
    width: 15px;
    height: 65px;
    border-radius: 8px;
    background: #d3d6d8;
}
.floating {
    position: absolute;
    right: 30px;
    bottom: 14px;
    display: flex;
    flex-direction: column;
    align-items: center;
    gap: 11px;
}
.counter {
    position: relative;
    width: 44px;
    height: 44px;
    margin-right: 4px;
    border-radius: 50%;
    background: #e60a28;
    color: #fff;
    font: bold 27px "Open Sans", sans-serif;
}
.plus {
    position: absolute;
    top: -9px;
    right: -9px;
    display: flex;
    align-items: center;
    justify-content: center;
    width: 25px;
    height: 25px;
    border: 2px solid #fff;
    border-radius: 50%;
    background: linear-gradient(90deg, #6a3fb8, #3556d0);
}
.explore {
    width: 67px;
    height: 67px;
    padding-top: 3px;
    border: 1px solid #cfd1d3;
    border-radius: 5px;
    background: #f8f8f8;
    box-shadow: 0 0 4px #b5b7b9;
}

.sidebar {
    display: flex;
    flex-direction: column;
    align-items: center;
    width: 100px;
    padding: 33px 0 42px;
    border-left: 2px solid #d2d4d7;
    color: #55585b;
}
.sidebar button {
    min-height: 34px;
    margin-bottom: 67px;
}
.sidebar hr {
    width: 36px;
    margin: -5px 0 62px;
    border: none;
    border-top: 2px solid #d5d7d9;
}
.sidebar .hide-panel {
    margin: auto 0 -8px;
}
.cal-num, .cal-small {
    font: 500 14px Roboto, sans-serif;
    fill: #2f73f0;
    text-anchor: middle;
}
.cal-small {
    font-size: 18px;
}
.cursor {
    position: absolute;
    left: 1311px;
    top: 1014px;
}
```
